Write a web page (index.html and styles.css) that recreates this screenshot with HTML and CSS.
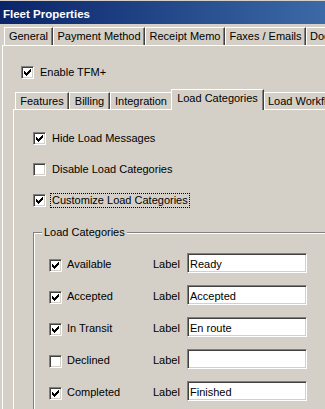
FILE: index.html
```html
<!DOCTYPE html>
<html>
<head>
<meta charset="utf-8">
<title>Fleet Properties</title>
<link rel="stylesheet" href="styles.css">
</head>
<body>
<div class="titlebar">Fleet Properties</div>
<div class="tabstrip outer-tabs">
  <div class="tab t-general">General</div>
  <div class="tab t-payment">Payment Method</div>
  <div class="tab t-receipt">Receipt Memo</div>
  <div class="tab t-faxes">Faxes / Emails</div>
  <div class="tab t-docs">Documents</div>
</div>
<div class="panel outer-panel">
  <div class="cbrow enable">
    <span class="cb"><svg width="9" height="9" viewBox="0 0 9 9"><path d="M7 1h1v1h-1zM6 2h2v1h-2zM1 3h1v1h-1zM5 3h3v1h-3zM1 4h2v1h-2zM4 4h3v1h-3zM1 5h5v1h-5zM2 6h3v1h-3zM3 7h1v1h-1z"/></svg></span>
    <span class="cbl">Enable TFM+</span>
  </div>
  <div class="tabstrip inner-tabs">
    <div class="tab t-features">Features</div>
    <div class="tab t-billing">Billing</div>
    <div class="tab t-integration noright">Integration</div>
    <div class="tab t-loadcat sel">Load Categories</div>
    <div class="tab t-workflow">Load Workflow</div>
  </div>
  <div class="panel inner-panel">
    <div class="rows">
      <div class="cbrow">
        <span class="cb"><svg width="9" height="9" viewBox="0 0 9 9"><path d="M7 1h1v1h-1zM6 2h2v1h-2zM1 3h1v1h-1zM5 3h3v1h-3zM1 4h2v1h-2zM4 4h3v1h-3zM1 5h5v1h-5zM2 6h3v1h-3zM3 7h1v1h-1z"/></svg></span>
        <span class="cbl">Hide Load Messages</span>
      </div>
      <div class="cbrow">
        <span class="cb"></span>
        <span class="cbl">Disable Load Categories</span>
      </div>
      <div class="cbrow">
        <span class="cb"><svg width="9" height="9" viewBox="0 0 9 9"><path d="M7 1h1v1h-1zM6 2h2v1h-2zM1 3h1v1h-1zM5 3h3v1h-3zM1 4h2v1h-2zM4 4h3v1h-3zM1 5h5v1h-5zM2 6h3v1h-3zM3 7h1v1h-1z"/></svg></span>
        <span class="cbl focus">Customize Load Categories</span>
      </div>
    </div>
    <div class="group">
      <div class="legend">Load Categories</div>
      <div class="grows">
        <div class="grow">
          <span class="cb"><svg width="9" height="9" viewBox="0 0 9 9"><path d="M7 1h1v1h-1zM6 2h2v1h-2zM1 3h1v1h-1zM5 3h3v1h-3zM1 4h2v1h-2zM4 4h3v1h-3zM1 5h5v1h-5zM2 6h3v1h-3zM3 7h1v1h-1z"/></svg></span>
          <span class="cbl">Available</span>
          <span class="lbl">Label</span>
          <span class="tb">Ready</span>
        </div>
        <div class="grow">
          <span class="cb"><svg width="9" height="9" viewBox="0 0 9 9"><path d="M7 1h1v1h-1zM6 2h2v1h-2zM1 3h1v1h-1zM5 3h3v1h-3zM1 4h2v1h-2zM4 4h3v1h-3zM1 5h5v1h-5zM2 6h3v1h-3zM3 7h1v1h-1z"/></svg></span>
          <span class="cbl">Accepted</span>
          <span class="lbl">Label</span>
          <span class="tb">Accepted</span>
        </div>
        <div class="grow">
          <span class="cb"><svg width="9" height="9" viewBox="0 0 9 9"><path d="M7 1h1v1h-1zM6 2h2v1h-2zM1 3h1v1h-1zM5 3h3v1h-3zM1 4h2v1h-2zM4 4h3v1h-3zM1 5h5v1h-5zM2 6h3v1h-3zM3 7h1v1h-1z"/></svg></span>
          <span class="cbl">In Transit</span>
          <span class="lbl">Label</span>
          <span class="tb">En route</span>
        </div>
        <div class="grow">
          <span class="cb"></span>
          <span class="cbl">Declined</span>
          <span class="lbl">Label</span>
          <span class="tb"></span>
        </div>
        <div class="grow">
          <span class="cb"><svg width="9" height="9" viewBox="0 0 9 9"><path d="M7 1h1v1h-1zM6 2h2v1h-2zM1 3h1v1h-1zM5 3h3v1h-3zM1 4h2v1h-2zM4 4h3v1h-3zM1 5h5v1h-5zM2 6h3v1h-3zM3 7h1v1h-1z"/></svg></span>
          <span class="cbl">Completed</span>
          <span class="lbl">Label</span>
          <span class="tb">Finished</span>
        </div>
      </div>
    </div>
  </div>
</div>
</body>
</html>
```

FILE: styles.css
```css
html, body {
  margin: 0;
  padding: 0;
}
body {
  width: 325px;
  height: 409px;
  overflow: hidden;
  background: #d4d0c8;
  color: #000;
  font-family: "Liberation Sans", Arial, sans-serif;
  font-size: 11px;
  line-height: 13px;
}
.titlebar {
  margin-top: 1px;
  height: 23px;
  box-sizing: border-box;
  padding: 7px 0 0 3px;
  color: #fff;
  font-weight: bold;
  font-size: 11.5px;
  white-space: nowrap;
  background: linear-gradient(to right, #0a246a 0%, #3c6aa6 100%);
}
.tabstrip {
  display: flex;
  align-items: flex-end;
  white-space: nowrap;
}
.outer-tabs {
  margin-top: 3px;
  height: 18px;
  padding-left: 4px;
}
.tab {
  flex: none;
  box-sizing: border-box;
  height: 18px;
  padding-top: 2px;
  border-top: 1px solid #fff;
  border-left: 1px solid #fff;
  border-right: 1px solid #404040;
  box-shadow: inset -1px 0 #808080;
  text-align: center;
  overflow: hidden;
}
.tab.noright {
  border-right: 0;
  box-shadow: none;
}
.t-general { width: 49px; }
.t-payment { width: 92px; }
.t-receipt { width: 80px; }
.t-faxes { width: 81px; }
.t-docs { width: 70px; text-align: left; padding-left: 3px; }
.inner-tabs {
  margin-top: 9px;
  margin-left: 12px;
  height: 20px;
}
.inner-tabs .tab { height: 17px; }
.inner-tabs .tab.sel {
  height: 21px;
  margin-bottom: -1px;
  position: relative;
  z-index: 1;
  background: #d4d0c8;
}
.t-features { width: 54px; }
.t-billing { width: 41px; }
.t-integration { width: 61px; }
.t-loadcat { width: 93px; }
.t-workflow { width: 90px; text-align: left; padding-left: 3px; }

.panel {
  border-top: 1px solid #fff;
  border-left: 1px solid #fff;
}
.outer-panel {
  margin-left: 2px;
  padding-top: 19px;
  width: 400px;
  height: 420px;
}
.enable { margin-left: 18px; }
.inner-panel {
  margin-left: 10px;
  padding-top: 21px;
  width: 400px;
  height: 400px;
}
.rows {
  display: flex;
  flex-direction: column;
  gap: 16px;
  padding-left: 19px;
}
.cbrow {
  display: flex;
  align-items: flex-start;
  height: 15px;
}
.cb {
  flex: none;
  box-sizing: border-box;
  width: 13px;
  height: 13px;
  margin-top: 1px;
  padding: 1px;
  border: 1px solid;
  border-color: #808080 #fff #fff #808080;
  box-shadow: inset 1px 1px #404040, inset -1px -1px #d4d0c8;
  background: #fff;
}
.cb svg {
  display: block;
}
.cbl {
  border: 1px solid transparent;
  padding: 0 1px;
  margin-left: 4px;
  white-space: nowrap;
}
.cbl.focus {
  border: 1px dotted #000;
}
.group {
  margin: 24px 0 0 19px;
  width: 320px;
  height: 200px;
  border-top: 1px solid #808080;
  border-left: 1px solid #808080;
  box-shadow: inset 1px 1px #fff;
}
.legend {
  width: max-content;
  margin: -7px 0 0 8px;
  padding: 0 2px;
  background: #d4d0c8;
}
.grows {
  margin-top: 14px;
  display: flex;
  flex-direction: column;
  gap: 12px;
  padding-left: 15px;
}
.grow {
  display: flex;
  align-items: flex-start;
  height: 20px;
}
.grow .cb { margin-top: 6px; }
.grow .cbl {
  box-sizing: border-box;
  margin-left: 3px;
  margin-top: 4px;
  width: 88px;
}
.lbl {
  flex: none;
  width: 34px;
  margin-top: 5px;
}
.tb {
  flex: none;
  box-sizing: border-box;
  width: 120px;
  height: 20px;
  padding: 4px 0 0 2px;
  border: 1px solid;
  border-color: #808080 #fff #fff #808080;
  box-shadow: inset 1px 1px #404040, inset -1px -1px #d4d0c8;
  background: #fff;
  white-space: nowrap;
}
```
